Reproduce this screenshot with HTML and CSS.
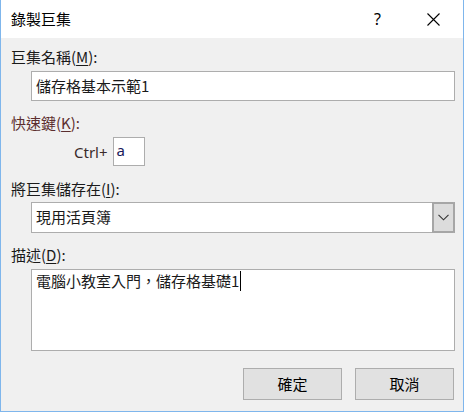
FILE: index.html
```html
<!DOCTYPE html>
<html lang="zh-Hant">
<head>
<meta charset="utf-8">
<title>錄製巨集</title>
<link rel="stylesheet" href="styles.css">
</head>
<body>
<div class="dialog">
  <div class="titlebar">
    <span class="title">錄製巨集</span>
    <span class="help">?</span>
    <span class="close">
      <svg width="13" height="13" viewBox="0 0 13 13"><path d="M0.5 0.5 L12.5 12.5 M12.5 0.5 L0.5 12.5" stroke="#000" stroke-width="1.1" fill="none"/></svg>
    </span>
  </div>
  <div class="content">
    <div class="label l1">巨集名稱(<u>M</u>):</div>
    <div class="field f1">儲存格基本示範1</div>

    <div class="label l2 maroon">快速鍵(<u>K</u>):</div>
    <div class="ctrlrow">
      <span class="ctrl">Ctrl+</span>
      <span class="keybox">a</span>
    </div>

    <div class="label l3">將巨集儲存在(<u>I</u>):</div>
    <div class="combo">
      <span class="combotext">現用活頁簿</span>
      <span class="combobtn">
        <svg width="11" height="7" viewBox="0 0 11 7"><path d="M0.5 0.8 L5.5 5.8 L10.5 0.8" stroke="#333" stroke-width="1.1" fill="none"/></svg>
      </span>
    </div>

    <div class="label l4">描述(<u>D</u>):</div>
    <div class="textarea"><span>電腦小教室入門，儲存格基礎1</span><span class="caret"></span></div>

    <div class="buttons">
      <div class="btn">確定</div>
      <div class="btn">取消</div>
    </div>
  </div>
</div>
</body>
</html>
```
FILE: styles.css
```css
* { box-sizing: border-box; }
html, body {
  margin: 0;
  padding: 0;
  width: 464px;
  height: 412px;
  overflow: hidden;
  background: #f0f0f0;
}
body {
  font-family: "Noto Sans CJK TC", "Noto Sans", sans-serif;
  font-size: 15px;
  color: #1a1a1a;
}
.dialog {
  width: 464px;
  height: 412px;
  border-left: 1px solid #7fb6ec;
  border-right: 1px solid #7fb6ec;
  border-bottom: 1px solid #7fb6ec;
  background: #f0f0f0;
  display: flex;
  flex-direction: column;
}
.titlebar {
  height: 38px;
  background: #fff;
  display: flex;
  align-items: center;
  padding-left: 10px;
  position: relative;
}
.title {
  font-size: 15px;
  line-height: 20px;
  color: #000;
  margin-top: -1px;
}
.help {
  font-family: "Noto Sans", "DejaVu Sans", sans-serif;
  font-size: 16px;
  margin-left: auto;
  margin-right: 46px;
  color: #000;
  margin-top: -1px;
}
.close {
  display: flex;
  margin-right: 23px;
  margin-top: 0;
}
.content {
  flex: 1;
  padding: 9px 8px 0 10px;
  display: flex;
  flex-direction: column;
}
.label {
  line-height: 20px;
  height: 20px;
}
.label u {
  text-decoration-thickness: 1px;
  text-underline-offset: 2px;
}
.maroon { color: #5c2e2e; }
.l2 { margin-top: 12px; }
.l3 { margin-top: 13px; }
.l4 { margin-top: 12px; }

.field {
  margin-top: 4px;
  margin-left: 20px;
  width: 424px;
  height: 30px;
  border: 1px solid #adadad;
  background: #fff;
  padding-left: 4px;
  line-height: 28px;
}
.ctrlrow {
  margin-top: 4px;
  height: 29px;
  display: flex;
  align-items: center;
  padding-left: 63px;
}
.ctrl {
  font-family: "Noto Sans", sans-serif;
  font-size: 15px;
  color: #3a2a2a;
  margin-right: 5px;
}
.keybox {
  width: 32px;
  height: 29px;
  border: 1px solid #adadad;
  background: #fff;
  padding-left: 3px;
  line-height: 25px;
  font-family: "Noto Sans", sans-serif;
  font-size: 15px;
  color: #1a1a5a;
}
.combo {
  margin-top: 3px;
  margin-left: 20px;
  width: 424px;
  height: 31px;
  border: 1px solid #adadad;
  border-right: 2px solid #a6a6a6;
  background: #fff;
  display: flex;
}
.combotext {
  flex: 1;
  padding-left: 4px;
  line-height: 28px;
}
.combobtn {
  width: 21px;
  margin: -1px 0;
  background: #dcdcdc;
  border: 2px solid #a6a6a6;
  border-right: 0;
  display: flex;
  align-items: center;
  justify-content: center;
}
.textarea {
  margin-top: 4px;
  margin-left: 20px;
  width: 424px;
  height: 82px;
  border: 1px solid #adadad;
  background: #fff;
  padding: 1px 0 0 4px;
  line-height: 20px;
}
.caret {
  display: inline-block;
  width: 1px;
  height: 20px;
  background: #000;
  vertical-align: top;
  margin-left: 1px;
}
.buttons {
  margin-top: 17px;
  display: flex;
  justify-content: flex-end;
  gap: 13px;
  padding-right: 1px;
}
.btn {
  width: 99px;
  height: 32px;
  border: 1px solid #adadad;
  background: #e1e1e1;
  display: flex;
  align-items: center;
  justify-content: center;
  line-height: 20px;
  color: #000;
}
```
